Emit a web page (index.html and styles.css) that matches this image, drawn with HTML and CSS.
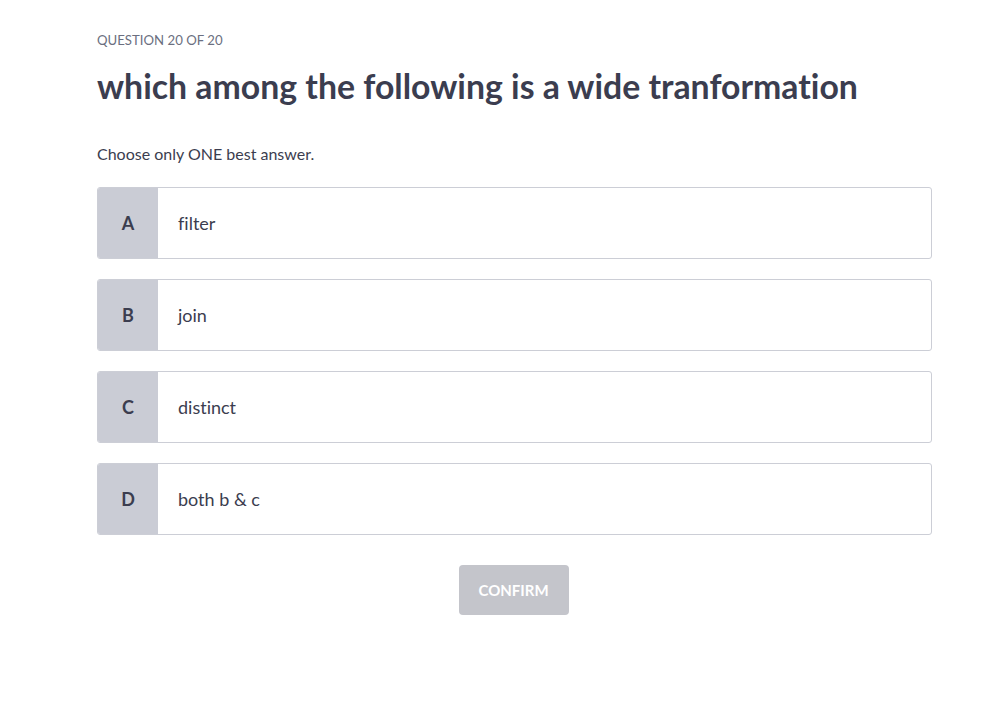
FILE: index.html
```html
<!DOCTYPE html>
<html>
<head>
<meta charset="utf-8">
<link rel="stylesheet" href="styles.css">
</head>
<body>
<main class="quiz">
  <div class="counter">QUESTION 20 OF 20</div>
  <h1 class="question">which among the following is a wide tranformation</h1>
  <p class="hint">Choose only ONE best answer.</p>
  <ul class="options">
    <li class="option"><span class="letter">A</span><span class="text">filter</span></li>
    <li class="option"><span class="letter">B</span><span class="text">join</span></li>
    <li class="option"><span class="letter">C</span><span class="text">distinct</span></li>
    <li class="option"><span class="letter">D</span><span class="text">both b &amp; c</span></li>
  </ul>
  <div class="actions"><button class="confirm" disabled>CONFIRM</button></div>
</main>
</body>
</html>
```
FILE: styles.css
```css
* { box-sizing: border-box; }
body {
  margin: 0;
  background: #fff;
  font-family: "Lato", "Noto Sans", sans-serif;
  font-variant-ligatures: none;
  color: #3b3d4f;
}
.quiz {
  width: 835px;
  margin-left: 97px;
  padding-top: 32px;
}
.counter {
  font-size: 13.2px;
  color: #6b6f80;
  line-height: 17px;
}
.question {
  margin: 17px 0 0;
  font-size: 33.8px;
  font-weight: 700;
  line-height: 40px;
  color: #3b3d4f;
}
.hint {
  margin: 38px 0 0;
  font-size: 16px;
  line-height: 20px;
  color: #3b3d4f;
}
.options {
  list-style: none;
  margin: 23px 0 0;
  padding: 0;
  display: flex;
  flex-direction: column;
  gap: 20px;
}
.option {
  display: flex;
  height: 72px;
  border: 1px solid #ccced6;
  border-radius: 3px;
  overflow: hidden;
  background: #fff;
}
.letter {
  width: 60px;
  background: #caccd5;
  display: flex;
  align-items: center;
  justify-content: center;
  font-size: 18px;
  font-weight: 700;
  color: #3b3d4f;
}
.text {
  display: flex;
  align-items: center;
  padding-left: 20px;
  font-size: 18px;
  color: #3b3d4f;
}
.actions {
  display: flex;
  justify-content: center;
  margin-top: 30px;
}
.confirm {
  width: 110px;
  height: 50px;
  border: none;
  border-radius: 4px;
  background: #c4c5cb;
  color: #fff;
  font-family: inherit;
  font-size: 15px;
  font-weight: 700;
  margin-left: -2px;
}
```
